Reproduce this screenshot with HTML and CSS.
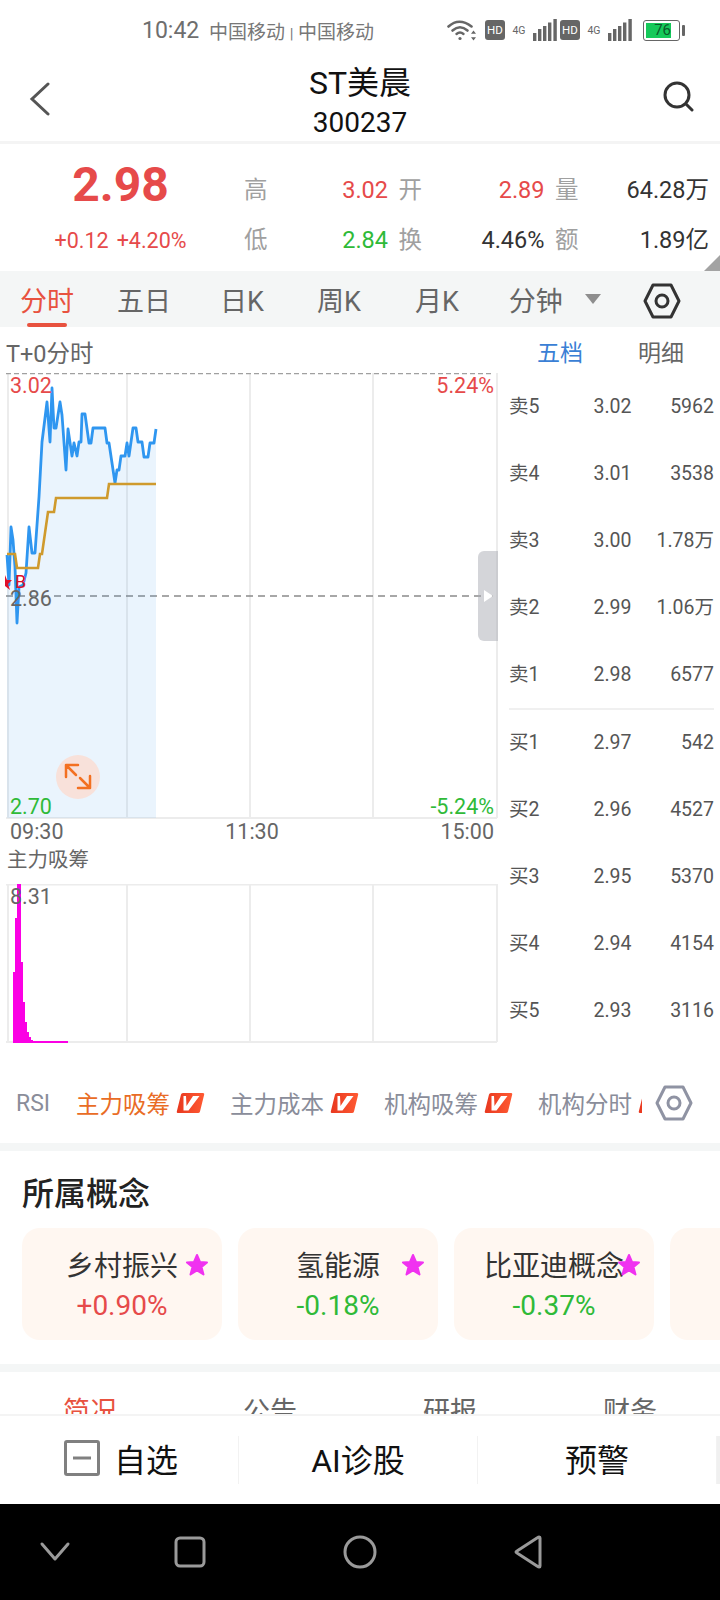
FILE: index.html
```html
<!DOCTYPE html>
<html lang="zh-CN">
<head>
    <meta charset="UTF-8">
    <meta name="viewport" content="width=device-width, initial-scale=1.0">
    <title>ST美晨 300237</title>
    <link rel="stylesheet" href="styles.css">
</head>
<body>
    <svg class="defs" width="0" height="0">
        <defs>
            <linearGradient id="vGrad" x1="0" y1="0" x2="1" y2="0">
                <stop offset="0" stop-color="#e8381f"/>
                <stop offset="1" stop-color="#ff5a33"/>
            </linearGradient>
            <g id="vBadge">
                <path d="M5 1.5Q5.4 0 7 0H27Q28.6 0 28.2 1.5L24 18.5Q23.600 20 22 20H2Q.4 20 .8 18.5Z" fill="url(#vGrad)"/>
                <path d="M7.500 3H10L10.500 13L17 3H23.500L12.500 17.500H7.500Z" fill="#fff"/>
            </g>
        </defs>
    </svg>

    <div class="status-bar">
        <span class="time">10:42</span>
        <span class="carrier">中国移动 <i>|</i> 中国移动</span>
        <div class="status-icons">
            <svg class="wifi" width="30" height="22" viewBox="0 0 30 22" fill="none" stroke="#666" stroke-linecap="round">
                <path d="M1.5 7.5Q12 -2 24.5 7.5" stroke-width="2.6"/>
                <path d="M5.5 11.5Q13 5 20.5 11.5" stroke-width="2.6"/>
                <path d="M9.5 15Q13 12 16.5 15" stroke-width="2.4"/>
                <circle cx="13" cy="19.5" r="1.6" fill="#666" stroke="none"/>
                <path d="M26.5 11.5l2.5 3.2h-5zM26.5 21.5l2.5 -3.2h-5z" fill="#666" stroke="none"/>
            </svg>
            <span class="hd">HD</span>
            <span class="net">4G</span>
            <svg class="bars" width="24" height="22" viewBox="0 0 24 22" fill="#666">
                <rect x="0" y="14" width="3.4" height="8"/><rect x="5" y="10" width="3.4" height="12"/><rect x="10" y="7" width="3.4" height="15"/><rect x="15" y="3.500" width="3.4" height="18.500"/><rect x="20.400" y="0" width="3.400" height="22"/>
            </svg>
            <span class="hd">HD</span>
            <span class="net">4G</span>
            <svg class="bars" width="24" height="22" viewBox="0 0 24 22" fill="#666">
                <rect x="0" y="14" width="3.4" height="8"/><rect x="5" y="10" width="3.4" height="12"/><rect x="10" y="7" width="3.4" height="15"/><rect x="15" y="3.500" width="3.4" height="18.500"/><rect x="20.400" y="0" width="3.400" height="22"/>
            </svg>
            <div class="battery"><span class="battery-level">76</span></div>
            <span class="battery-cap"></span>
        </div>
    </div>

    <div class="title-bar">
        <svg class="back" width="22" height="34" viewBox="0 0 22 34" fill="none" stroke="#555" stroke-width="3" stroke-linecap="round"><path d="M19 2L3 17L19 32"/></svg>
        <div class="stock-name">
            <div class="name">ST美晨</div>
            <div class="code">300237</div>
        </div>
        <svg class="search" width="32" height="32" viewBox="0 0 32 32" fill="none" stroke="#333" stroke-width="3" stroke-linecap="round"><circle cx="15" cy="14" r="12"/><path d="M24 23L30 29"/></svg>
    </div>

    <div class="quote">
        <div class="price-box">
            <div class="price">2.98</div>
            <div class="change"><span>+0.12</span><span>+4.20%</span></div>
        </div>
        <div class="quote-grid">
            <div class="cell"><span class="lbl">高</span><span class="red">3.02</span></div>
            <div class="cell"><span class="lbl">开</span><span class="red">2.89</span></div>
            <div class="cell"><span class="lbl">量</span><span>64.28万</span></div>
            <div class="cell"><span class="lbl">低</span><span class="green">2.84</span></div>
            <div class="cell"><span class="lbl">换</span><span>4.46%</span></div>
            <div class="cell"><span class="lbl">额</span><span>1.89亿</span></div>
        </div>
        <span class="corner"></span>
    </div>

    <div class="period-tabs">
        <span class="tab active">分时</span>
        <span class="tab">五日</span>
        <span class="tab">日K</span>
        <span class="tab">周K</span>
        <span class="tab">月K</span>
        <span class="tab">分钟</span>
        <span class="tab-arrow"></span>
        <svg class="hex" width="38" height="36" viewBox="0 0 38 36" fill="none" stroke="#333" stroke-width="3" stroke-linejoin="round"><path d="M10 2H28L36 18L28 34H10L2 18Z"/><circle cx="19" cy="18" r="6"/></svg>
    </div>

    <div class="chart-area">
        <div class="charts">
            <div class="chart-title">T+0分时</div>
            <div class="price-chart">
                <svg width="500" height="446" viewBox="0 373 500 446">
                    <g stroke="#ececec" stroke-width="2">
                        <path d="M8 373V818M127 373V818M250 373V818M373 373V818M497 373V818"/>
                        <path d="M6 818H497"/>
                    </g>
                    <path d="M6 373.500H494" stroke="#a0a0a0" stroke-width="1.500" stroke-dasharray="5 3" fill="none"/>
                    <path d="M6 596H497" stroke="#8a8a8a" stroke-width="1.500" stroke-dasharray="7 5" fill="none"/>
                    <polygon fill="#2e8ff0" fill-opacity=".1" points="7,818 7,555 9,585 11,527 13,540 15,567 17,623 19,587 23,585 26,573 29,527 32,553 35,553 39,497 42,442 47,402 50,442 52,388 54,428 56,428 60,402 62,415 66,470 68,429 72,456 74,443 77,456 79,442 81,442 82,414 85,414 89,443 91,443 93,428 105,428 107,443 109,443 115,483 117,470 119,470 121,456 125,456 127,443 129,456 133,428 136,428 138,442 142,442 144,457 148,457 150,443 154,443 156,429 156,818"/>
                    <polyline fill="none" stroke="#2f96f0" stroke-width="2.800" stroke-linejoin="round" points="7,555 9,585 11,527 13,540 15,567 17,623 19,587 23,585 26,573 29,527 32,553 35,553 39,497 42,442 47,402 50,442 52,388 54,428 56,428 60,402 62,415 66,470 68,429 72,456 74,443 77,456 79,442 81,442 82,414 85,414 89,443 91,443 93,428 105,428 107,443 109,443 115,483 117,470 119,470 121,456 125,456 127,443 129,456 133,428 136,428 138,442 142,442 144,457 148,457 150,443 154,443 156,429"/>
                    <polyline fill="none" stroke="#cf9a2d" stroke-width="2.600" points="7,554 15,554 17,568 38,568 40,554 42,554 48,512 54,512 56,498 107,498 109,484 156,484"/>
                    <polygon fill="#e0102a" points="5,575 7,580 12,580 8,584 10,590 5,586"/>
                </svg>
                <span class="mark-b">B</span>
                <span class="axis-label top-left red">3.02</span>
                <span class="axis-label top-right red">5.24%</span>
                <span class="axis-label mid-left">2.86</span>
                <span class="axis-label bottom-left green">2.70</span>
                <span class="axis-label bottom-right green">-5.24%</span>
                <div class="expand">
                    <svg width="44" height="44" viewBox="0 0 44 44" fill="none" stroke="#f37021" stroke-width="2.500" stroke-linecap="round" stroke-linejoin="round">
                        <path d="M22 10H10V22M10 10L20 20M24 23L34 33M34 21V33H22"/>
                    </svg>
                </div>
                <div class="handle"><span></span></div>
            </div>
            <div class="time-axis"><span>09:30</span><span>11:30</span><span>15:00</span></div>
            <div class="chart-title sub">主力吸筹</div>
            <div class="flow-chart">
                <svg width="500" height="160" viewBox="0 884 500 160">
                    <path d="M6 884.500H497M6 1042H497M8 884V1042M127 884V1042M250 884V1042M373 884V1042M497 884V1042" stroke="#ececec" stroke-width="2" fill="none"/>
                    <polygon fill="#fb00e4" points="13,1043 13,972 15,972 15,918 17,918 17,884 21,884 21,962 23,962 23,1002 25,1002 25,1022 27,1022 27,1032 29,1032 29,1037 31,1037 31,1040 33,1040 33,1041 68,1041 68,1043"/>
                </svg>
                <span class="axis-label flow-max">8.31</span>
            </div>
        </div>

        <div class="book">
            <div class="book-tabs"><span class="blue">五档</span><span>明细</span></div>
            <div class="book-row"><span>卖5</span><span class="bp">3.02</span><span class="bq">5962</span></div>
            <div class="book-row"><span>卖4</span><span class="bp">3.01</span><span class="bq">3538</span></div>
            <div class="book-row"><span>卖3</span><span class="bp">3.00</span><span class="bq">1.78万</span></div>
            <div class="book-row"><span>卖2</span><span class="bp">2.99</span><span class="bq">1.06万</span></div>
            <div class="book-row"><span>卖1</span><span class="bp">2.98</span><span class="bq">6577</span></div>
            <div class="book-line"></div>
            <div class="book-row"><span>买1</span><span class="bp">2.97</span><span class="bq">542</span></div>
            <div class="book-row"><span>买2</span><span class="bp">2.96</span><span class="bq">4527</span></div>
            <div class="book-row"><span>买3</span><span class="bp">2.95</span><span class="bq">5370</span></div>
            <div class="book-row"><span>买4</span><span class="bp">2.94</span><span class="bq">4154</span></div>
            <div class="book-row"><span>买5</span><span class="bp">2.93</span><span class="bq">3116</span></div>
        </div>
    </div>

    <div class="indicators">
        <div class="ind-list">
            <span class="ind rsi">RSI</span>
            <span class="ind on">主力吸筹<svg width="29" height="20"><use href="#vBadge"/></svg></span>
            <span class="ind">主力成本<svg width="29" height="20"><use href="#vBadge"/></svg></span>
            <span class="ind">机构吸筹<svg width="29" height="20"><use href="#vBadge"/></svg></span>
            <span class="ind">机构分时<svg width="29" height="20"><use href="#vBadge"/></svg></span>
        </div>
        <svg class="ind-hex" width="38" height="36" viewBox="0 0 38 36" fill="none" stroke="#8f93a3" stroke-width="3" stroke-linejoin="round"><path d="M10 2H28L36 18L28 34H10L2 18Z"/><circle cx="19" cy="18" r="6"/></svg>
    </div>

    <div class="concepts">
        <h2>所属概念</h2>
        <div class="concept-list">
            <div class="concept">
                <div class="c-name">乡村振兴</div><div class="c-pct red">+0.90%</div>
                <svg class="star" width="24" height="24" viewBox="0 0 24 24"><polygon fill="#f032f0" stroke="#f032f0" stroke-width="2" stroke-linejoin="round" points="12,2 15,9 22,9.500 16.500,14 18.500,21.500 12,17.500 5.500,21.500 7.500,14 2,9.500 9,9"/></svg>
            </div>
            <div class="concept">
                <div class="c-name">氢能源</div><div class="c-pct green">-0.18%</div>
                <svg class="star" width="24" height="24" viewBox="0 0 24 24"><polygon fill="#f032f0" stroke="#f032f0" stroke-width="2" stroke-linejoin="round" points="12,2 15,9 22,9.500 16.500,14 18.500,21.500 12,17.500 5.500,21.500 7.500,14 2,9.500 9,9"/></svg>
            </div>
            <div class="concept">
                <div class="c-name">比亚迪概念</div><div class="c-pct green">-0.37%</div>
                <svg class="star" width="24" height="24" viewBox="0 0 24 24"><polygon fill="#f032f0" stroke="#f032f0" stroke-width="2" stroke-linejoin="round" points="12,2 15,9 22,9.500 16.500,14 18.500,21.500 12,17.500 5.500,21.500 7.500,14 2,9.500 9,9"/></svg>
            </div>
            <div class="concept"></div>
        </div>
    </div>

    <div class="info-tabs">
        <span class="info-tab active">简况</span>
        <span class="info-tab">公告</span>
        <span class="info-tab">研报</span>
        <span class="info-tab">财务</span>
    </div>

    <div class="action-bar">
        <div class="action first">
            <svg width="36" height="36" viewBox="0 0 36 36" fill="none" stroke="#808080" stroke-width="3"><rect x="1.500" y="1.500" width="33" height="33" rx="1.500"/><path d="M9 18H27"/></svg>
            <span>自选</span>
        </div>
        <div class="action">AI诊股</div>
        <div class="action">预警</div>
        <div class="action edge"></div>
    </div>

    <div class="nav-bar">
        <svg width="720" height="96" viewBox="0 0 720 96" fill="none" stroke="#9a9a9a" stroke-width="3" stroke-linejoin="round" stroke-linecap="round">
            <path d="M42 40L55 55L68 40"/>
            <rect x="176" y="34" width="28" height="28" rx="4"/>
            <circle cx="360" cy="48" r="15"/>
            <path d="M540 34V62Q540 64 537 62L517 49Q515 48 517 47L537 34Q540 32 540 34Z"/>
        </svg>
    </div>
</body>
</html>
```

FILE: styles.css
```css
* {
    box-sizing: border-box;
}
body {
    margin: 0;
    width: 720px;
    height: 1600px;
    overflow: hidden;
    background: #fff;
    color: #333;
    font-family: Roboto, "Noto Sans CJK SC", sans-serif;
}
.defs {
    position: absolute;
}
.red {
    color: #e64a4a;
}
.green {
    color: #2fba38;
}
.blue {
    color: #3a7fd5;
}

/* status bar */
.status-bar {
    height: 60px;
    padding: 0 0 0 142px;
    display: flex;
    align-items: center;
    color: #6e6e6e;
}
.time {
    font-size: 23px;
    width: 67px;
}
.carrier {
    font-size: 19px;
    width: 238px;
    color: #777;
}
.carrier i {
    font-style: normal;
    font-size: 15px;
}
.status-icons {
    display: flex;
    align-items: center;
}
.wifi {
    margin-right: 8px;
}
.hd {
    width: 20px;
    height: 20px;
    border-radius: 3px;
    background: #666;
    color: #fff;
    font-size: 11.500px;
    line-height: 20px;
    text-align: center;
}
.net {
    width: 28px;
    text-align: center;
    font-size: 10.500px;
    color: #666;
}
.bars {
    margin-right: 3px;
}
.battery {
    width: 37px;
    height: 21px;
    margin-left: 8px;
    border: 1.500px solid #666;
    border-radius: 3px;
    padding: 2px;
}
.battery-level {
    display: block;
    width: 25px;
    height: 100%;
    background: #16c95a;
    color: #0b5a2a;
    font-size: 15px;
    line-height: 15px;
    text-align: right;
}
.battery-cap {
    width: 3px;
    height: 11px;
    margin-left: 2px;
    background: #666;
    border-radius: 1px;
}

/* title */
.title-bar {
    height: 84px;
    padding: 0 26px 0 29px;
    display: flex;
    align-items: center;
    justify-content: space-between;
    border-bottom: 3px solid #f4f4f4;
}
.back {
    margin: -3px 7px 0 0;
}
.search {
    margin-top: -7px;
}
.stock-name {
    padding-top: 3px;
    text-align: center;
    color: #111;
}
.name {
    font-size: 32px;
    line-height: 42px;
}
.code {
    font-size: 28px;
    line-height: 38px;
}

/* quote */
.quote {
    height: 127px;
    position: relative;
    display: flex;
}
.price-box {
    width: 244px;
    padding-top: 13px;
    text-align: center;
    color: #e64a4a;
}
.price {
    font-size: 48px;
    font-weight: 700;
    line-height: 56px;
    padding-right: 3px;
}
.change {
    margin-top: 13px;
    font-size: 21.500px;
    line-height: 30px;
    display: flex;
    justify-content: center;
    gap: 8px;
    padding-right: 3px;
}
.quote-grid {
    display: grid;
    grid-template-columns: 144px 146px 154px;
    grid-auto-rows: 50px;
    column-gap: 10.500px;
    padding-top: 21px;
    font-size: 23.500px;
    line-height: 50px;
}
.cell {
    display: flex;
    justify-content: space-between;
}
.lbl {
    color: #a0a0a0;
}
.corner {
    position: absolute;
    right: 0;
    bottom: 0;
    width: 0;
    height: 0;
    border-left: 16px solid transparent;
    border-bottom: 16px solid #a3a3a3;
}

/* period tabs */
.period-tabs {
    height: 56px;
    background: #f4f6f6;
    padding-left: 20px;
    display: flex;
    align-items: center;
    font-size: 27px;
    color: #666;
    position: relative;
}
.tab {
    margin-right: 52px;
    padding-top: 6px;
    line-height: 50px;
    position: relative;
}
.tab:nth-child(1) {
    margin-right: 43px;
}
.tab:nth-child(2) {
    margin-right: 49px;
}
.tab:nth-child(3) {
    margin-right: 53px;
}
.tab:nth-child(4) {
    margin-right: 54px;
}
.tab:nth-child(5) {
    margin-right: 50px;
}
.tab:nth-child(6) {
    margin-right: 22px;
}
.tab.active {
    color: #e8523f;
}
.tab.active::after {
    content: "";
    position: absolute;
    left: 7px;
    right: 7px;
    bottom: 0;
    height: 4px;
    border-radius: 2px;
    background: #e8523f;
}
.tab-arrow {
    width: 0;
    height: 0;
    border-left: 8px solid transparent;
    border-right: 8px solid transparent;
    border-top: 10px solid #8e8e8e;
    margin-right: 43px;
}
.hex {
    margin: 4px 0 0 -1px;
}

/* charts and order book */
.chart-area {
    height: 738px;
    display: flex;
}
.charts {
    width: 500px;
}
.chart-title {
    height: 46px;
    padding: 12px 0 0 6px;
    font-size: 23.500px;
    line-height: 30px;
    color: #666;
}
.chart-title.sub {
    height: 40px;
    padding: 0 0 0 7px;
    font-size: 20.500px;
    line-height: 32px;
}
.price-chart,
.flow-chart {
    position: relative;
}
.price-chart {
    height: 446px;
}
.price-chart svg,
.flow-chart svg {
    display: block;
}
.axis-label {
    position: absolute;
    font-size: 21.500px;
    line-height: 24px;
    color: #666;
}
.axis-label.red {
    color: #e64a4a;
}
.axis-label.green {
    color: #2fba38;
}
.top-left {
    left: 10px;
    top: 1px;
}
.top-right {
    right: 6px;
    top: 1px;
}
.mid-left {
    left: 10px;
    top: 214px;
}
.bottom-left {
    left: 10px;
    top: 422px;
}
.bottom-right {
    right: 6px;
    top: 422px;
}
.flow-max {
    left: 10px;
    top: 1px;
}
.mark-b {
    position: absolute;
    left: 15px;
    top: 199px;
    font-size: 18px;
    line-height: 20px;
    color: #e0102a;
}
.expand {
    position: absolute;
    left: 56px;
    top: 382px;
    width: 44px;
    height: 44px;
    border-radius: 50%;
    background: #f8e1da;
}
.handle {
    position: absolute;
    left: 478px;
    top: 178px;
    width: 20px;
    height: 90px;
    background: rgba(170, 172, 180, .5);
    border-radius: 6px 0 0 6px;
    display: flex;
    align-items: center;
    justify-content: center;
}
.handle span {
    width: 0;
    height: 0;
    border-left: 9px solid #fff;
    border-top: 6px solid transparent;
    border-bottom: 6px solid transparent;
}
.time-axis {
    height: 25px;
    padding: 0 6px 0 10px;
    display: flex;
    justify-content: space-between;
    font-size: 21.500px;
    line-height: 26px;
    color: #666;
}
.book {
    width: 220px;
    padding: 0 6px 0 9px;
    font-size: 19.500px;
    line-height: 24px;
    color: #555;
}
.book-tabs {
    height: 47px;
    padding: 12px 0 0 28px;
    display: flex;
    gap: 55px;
    font-size: 23px;
    line-height: 30px;
    color: #666;
}
.book-row {
    height: 66.800px;
    display: flex;
    align-items: center;
}
.bp {
    margin-left: 54px;
}
.bq {
    margin-left: auto;
}
.book-line {
    height: 2px;
    background: #f0f0f0;
}

/* indicator strip */
.indicators {
    height: 78px;
    padding: 0 27px 0 16px;
    display: flex;
    align-items: center;
    justify-content: space-between;
}
.ind-list {
    width: 626px;
    display: flex;
    align-items: center;
    overflow: hidden;
    white-space: nowrap;
    font-size: 23.500px;
    color: #8a8d9a;
    margin-top: -2px;
}
.ind {
    display: inline-flex;
    align-items: center;
    gap: 6px;
    margin-right: 25px;
}
.ind svg {
    flex: none;
}
.ind.rsi {
    font-size: 23px;
    margin-right: 26px;
}
.ind.on {
    color: #e96c25;
}
.ind-hex {
    margin-top: -2px;
}

/* concepts */
.concepts {
    height: 229px;
    border-top: 8px solid #f4f6f6;
    border-bottom: 8px solid #f4f6f6;
    overflow: hidden;
}
.concepts h2 {
    margin: 0;
    padding: 20px 0 0 22px;
    font-size: 32px;
    font-weight: 500;
    line-height: 46px;
    color: #222;
}
.concept-list {
    margin-top: 11px;
    padding-left: 22px;
    display: flex;
    gap: 16px;
}
.concept {
    flex: none;
    width: 200px;
    height: 112px;
    position: relative;
    padding-top: 19px;
    border-radius: 18px;
    background: #fff7f1;
    text-align: center;
}
.c-name {
    font-size: 28px;
    line-height: 39px;
    color: #333;
}
.c-pct {
    font-size: 28px;
    line-height: 39px;
}
.star {
    position: absolute;
    right: 13px;
    top: 25px;
}

/* bottom */
.info-tabs {
    height: 42px;
    overflow: hidden;
    padding: 20px 0 0 63px;
    display: flex;
    gap: 126px;
    font-size: 27px;
    line-height: 40px;
    color: #666;
}
.info-tab.active {
    color: #e8523f;
}
.action-bar {
    height: 90px;
    border-top: 2px solid #f4f4f4;
    padding-top: 20px;
    display: flex;
    font-size: 32px;
    color: #111;
}
.action {
    width: 239px;
    height: 48px;
    padding-bottom: 4px;
    border-right: 1px solid #f2f2f2;
    display: flex;
    align-items: center;
    justify-content: center;
    gap: 14px;
}
.action.first {
    justify-content: flex-start;
    padding-left: 64px;
}
.action.edge {
    width: 3px;
    border-right: 0;
    background: #f0f0f0;
}
.nav-bar {
    height: 96px;
    background: #000;
}
.nav-bar svg {
    display: block;
}
```
